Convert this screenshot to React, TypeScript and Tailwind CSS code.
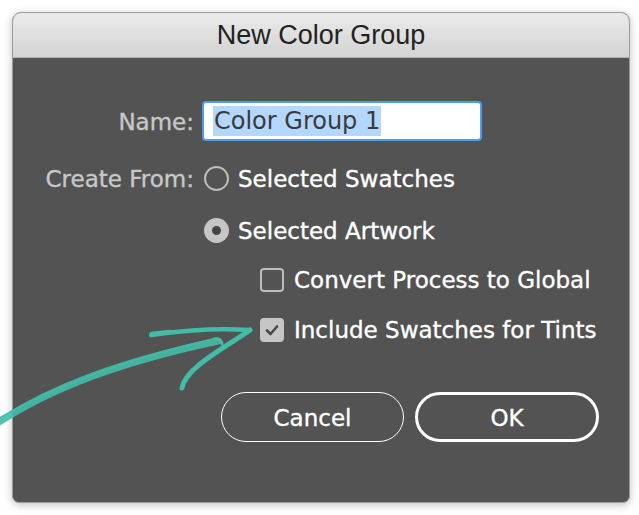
export default function App() {
  const body = { fontFamily: '"DejaVu Sans", "Open Sans", sans-serif' };

  return (
    <div className="relative h-[515px] w-[639px] overflow-hidden bg-white">
      <div
        className="ml-3 mt-3 flex h-[491px] w-[618px] flex-col overflow-hidden rounded-t-[9px] rounded-b-[7px] border border-[#9c9c9c] bg-[#535353] shadow-[0_2px_8px_rgba(0,0,0,0.25)]"
        style={body}
      >
        <div
          className="flex h-[45px] shrink-0 items-center justify-center border-b border-[#b4b4b4] bg-gradient-to-b from-[#ebebeb] to-[#d3d3d3] text-[27px] text-[#222]"
          style={{ fontFamily: '"Liberation Sans", Arial, sans-serif' }}
        >
          New Color Group
        </div>

        <div className="flex flex-col pt-[43px] [-webkit-text-stroke:0.35px_currentColor]">
          <div className="flex h-[40px] items-center">
            <div className="w-[181px] pt-[2px] text-right text-[23px] text-[#c8c8c8]">Name:</div>
            <div className="ml-2 flex h-[40px] w-[280px] items-center rounded-[4px] border-2 border-[#4a9ff0] bg-white pl-[9px] [-webkit-text-stroke:0px]">
              <span className="bg-[#b3d7ff] px-[1px] text-[24px] leading-[30px] text-[#3a3a3a]">
                Color Group 1
              </span>
            </div>
          </div>

          <div className="mt-[22px] flex h-[31px] items-center">
            <div className="w-[181px] pt-[2px] text-right text-[23px] text-[#c8c8c8]">Create From:</div>
            <div className="ml-[10px] h-[25px] w-[25px] rounded-full border-2 border-[#bdbdbd]" />
            <span className="ml-[9px] pt-[2px] text-[23px] text-white">Selected Swatches</span>
          </div>

          <div className="mt-[21px] flex h-[31px] items-center pl-[191px]">
            <div className="flex h-[25px] w-[25px] items-center justify-center rounded-full bg-[#c6c6c6]">
              <div className="h-[9px] w-[9px] rounded-full bg-[#454545]" />
            </div>
            <span className="ml-[9px] pt-[2px] text-[23px] text-white">Selected Artwork</span>
          </div>

          <div className="mt-[18px] flex h-[31px] items-center pl-[247px]">
            <div className="h-[24px] w-[24px] rounded-[4px] border-2 border-[#bdbdbd]" />
            <span className="ml-[10px] pt-[2px] text-[23px] text-white">Convert Process to Global</span>
          </div>

          <div className="mt-[19px] flex h-[31px] items-center pl-[247px]">
            <div className="flex h-[24px] w-[24px] items-center justify-center rounded-[4px] bg-[#c6c6c6]">
              <svg width="16" height="16" viewBox="0 0 16 16">
                <path
                  d="M3 8.5 L6.5 12 L13 4.5"
                  fill="none"
                  stroke="#4a4a4a"
                  strokeWidth="2.6"
                  strokeLinecap="round"
                  strokeLinejoin="round"
                />
              </svg>
            </div>
            <span className="ml-[10px] pt-[2px] text-[23px] text-white">Include Swatches for Tints</span>
          </div>

          <div className="mt-[47px] flex gap-[11px] pl-[208px]">
            <button className="flex h-[50px] w-[183px] items-center justify-center rounded-full border-[1.5px] border-white pt-[2px] text-[23px] text-white">
              Cancel
            </button>
            <button className="flex h-[50px] w-[184px] items-center justify-center rounded-full border-[3px] border-white pt-[2px] text-[23px] text-white">
              OK
            </button>
          </div>
        </div>
      </div>

      {/* teal hand-drawn arrow */}
      <svg
        className="pointer-events-none absolute left-0 top-0"
        width="639"
        height="515"
        viewBox="0 0 639 515"
      >
        <g fill="none" stroke="#43bca7" strokeLinecap="round" strokeLinejoin="round">
          <path d="M-4 424 C 50 388, 120 362, 218 341" strokeWidth="7" opacity="0.9" />
          <path d="M-4 420 C 60 383, 130 358, 214 339" strokeWidth="2" opacity="0.7" />
          <path d="M214 339 Q 221 338 222 344" strokeWidth="3" />
          <path d="M151 335 C 185 330, 220 328, 250 330" strokeWidth="4.5" />
          <path d="M151 333 L 170 331" strokeWidth="2.5" />
          <path d="M250 330 C 225 348, 185 368, 182 388" strokeWidth="5" />
        </g>
      </svg>
    </div>
  );
}
